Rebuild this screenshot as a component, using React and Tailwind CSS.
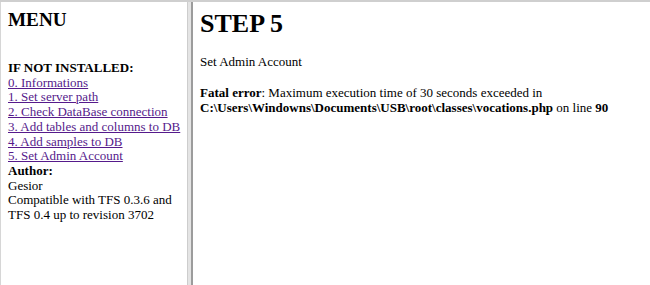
import React from 'react';

const links = [
  '0. Informations',
  '1. Set server path',
  '2. Check DataBase connection',
  '3. Add tables and columns to DB',
  '4. Add samples to DB',
  '5. Set Admin Account',
];

function MenuFrame() {
  return (
    <div className="w-[187px] shrink-0 border-l border-[#d6d6d6] pl-[7px] pt-[7px] text-[13px] leading-[14.7px]">
      <h2 className="text-[19.2px] font-bold leading-[21.3px]">MENU</h2>
      <div className="mt-[16px]">
        <br />
        <b>IF NOT INSTALLED:</b>
        <br />
        {links.map((l) => (
          <React.Fragment key={l}>
            <a href="#" className="text-[#551a8b] underline">{l}</a>
            <br />
          </React.Fragment>
        ))}
        <b>Author:</b>
        <br />
        Gesior
        <br />
        Compatible with TFS 0.3.6 and
        <br />
        TFS 0.4 up to revision 3702
      </div>
    </div>
  );
}

function StepFrame() {
  return (
    <div className="flex-1 pl-[7px] pt-[8px] text-[13px] leading-[14.7px]">
      <h1 className="text-[26px] font-bold leading-[28.3px]">STEP 5</h1>
      <p className="mt-[17px]">Set Admin Account</p>
      <p className="mt-[16px]">
        <b>Fatal error</b>: Maximum execution time of 30 seconds exceeded in
        <br />
        <b>C:\Users\Windowns\Documents\USB\root\classes\vocations.php</b> on line <b>90</b>
      </p>
    </div>
  );
}

export default function App() {
  return (
    <div className="h-[285px] w-[650px] overflow-hidden border-t-2 border-[#cfcfcf] bg-white text-black font-['Liberation_Serif',serif]">
      <div className="flex h-full">
        <MenuFrame />
        <div className="w-[6px] shrink-0 border-l border-[#cdcdcd] border-r-2 border-r-[#9c9c9c] bg-[#e4e4e4]" />
        <StepFrame />
      </div>
    </div>
  );
}
